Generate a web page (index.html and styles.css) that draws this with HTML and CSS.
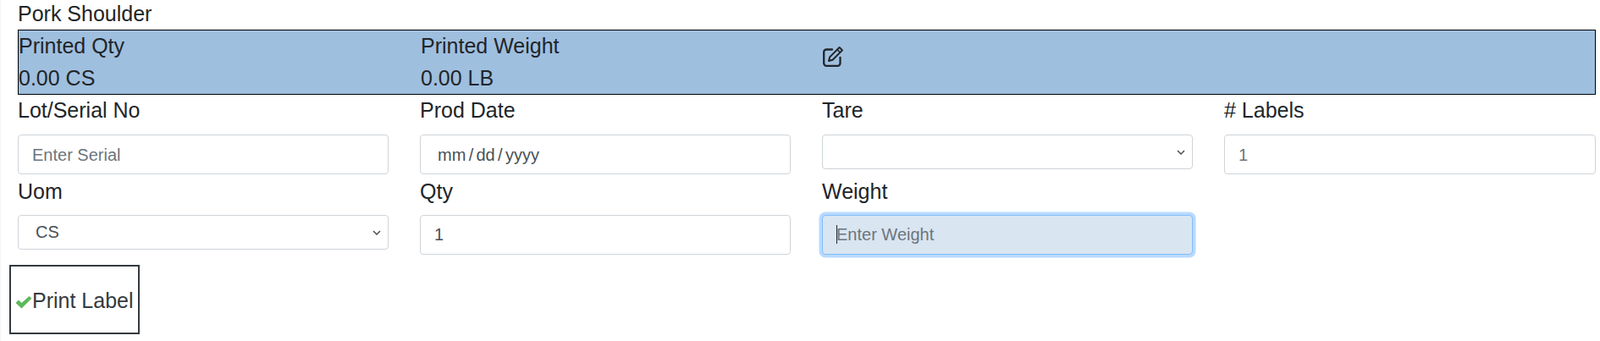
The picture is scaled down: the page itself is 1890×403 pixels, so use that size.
FILE: index.html
```html
<!DOCTYPE html>
<html lang="en">
<head>
<meta charset="utf-8">
<title>Print Label</title>
<link rel="stylesheet" href="styles.css">
</head>
<body>
<div class="page">
  <div class="title">Pork Shoulder</div>
  <div class="band">
    <div class="band-col"><div>Printed Qty</div><div>0.00 CS</div></div>
    <div class="band-col"><div>Printed Weight</div><div>0.00 LB</div></div>
    <div class="band-icon">
      <svg class="edit-icon" viewBox="0 0 25 25" fill="none" stroke="#212529" stroke-width="2.3" stroke-linecap="round" stroke-linejoin="round">
        <path d="M11 4.5H4.2A3 3 0 0 0 1.2 7.5V20.8A3 3 0 0 0 4.2 23.8H17.5A3 3 0 0 0 20.5 20.8V14"/>
        <path d="M19.6 2 23 5.4 11.6 16.8 7 18l1.2-4.6Z" stroke-width="2"/>
        <path d="M17 4.6l3.4 3.4" stroke-width="1.6"/>
      </svg>
    </div>
  </div>
  <div class="form-grid">
    <div class="field first"><label>Lot/Serial No</label><input class="control" type="text" placeholder="Enter Serial"></div>
    <div class="field first"><label>Prod Date</label><input class="control date" type="text" value="mm / dd / yyyy"></div>
    <div class="field first"><label>Tare</label><select class="control select"><option></option></select></div>
    <div class="field first"><label># Labels</label><input class="control muted" type="text" value="1"></div>
    <div class="field"><label>Uom</label><select class="control select"><option>CS</option></select></div>
    <div class="field"><label>Qty</label><input class="control" type="text" value="1"></div>
    <div class="field"><label>Weight</label>
      <div class="caret-wrap"><input class="control focused" type="text" placeholder="Enter Weight"><span class="caret"></span></div>
    </div>
  </div>
  <button class="print" type="button">
    <svg class="check" viewBox="0 0 20 16"><path d="M0.5 9 4 5.5 7.5 9 16.5 1 19.5 3.5 7.5 15.5Z" fill="#5cb85c"/></svg>Print Label
  </button>
</div>
</body>
</html>
```
FILE: styles.css
```css
* { box-sizing: border-box; }
html, body { margin: 0; padding: 0; background: #fff; }
body { font-family: "Liberation Sans", Arial, sans-serif; color: #212529; }
.page {
  width: 1890px;
  height: 403px;
  padding: 0 5px 0 20px;
  border-left: 1px solid #f4f4f4;
  overflow: hidden;
}
.title { font-size: 25px; line-height: 32px; height: 35px; }
.band {
  display: grid;
  grid-template-columns: repeat(3, 475px) 1fr;
  height: 77px;
  background: #9fbfdf;
  border: 1px solid #000;
  font-size: 25px;
  line-height: 36px;
}
.band-col { display: grid; grid-auto-rows: 36px; row-gap: 2px; align-content: start; }
.band-icon { padding-top: 18px; }
.edit-icon { width: 25px; height: 25px; display: block; }
.form-grid {
  display: grid;
  grid-template-columns: 438px 438px 438px 1fr;
  column-gap: 37px;
}
.field { height: 95px; }
.field label { display: block; font-size: 25px; line-height: 36px; padding-top: 3px; margin-bottom: 10px; }
.field.first { height: 93px; }
.field.first label { padding-top: 0; margin-bottom: 11px; }
.control {
  display: block;
  width: 100%;
  height: 47px;
  padding: 7px 16px 8px;
  font: 20px/30px "Liberation Sans", Arial, sans-serif;
  color: #495057;
  background: #fff;
  border: 1px solid #ced4da;
  border-radius: 4px;
  outline: none;
}
.field.first .control { padding-top: 8px; padding-bottom: 7px; }
.control::placeholder { color: #6c757d; }
.field.first .date { padding-left: 20px; word-spacing: -2.25px; }
.muted { color: #6c757d; }
.field .select, .field.first .select {
  height: 41px;
  padding: 3px 30px 5px 20px;
  appearance: none;
  background: #fff url("data:image/svg+xml,%3Csvg xmlns='http://www.w3.org/2000/svg' viewBox='0 0 10 6'%3E%3Cpath d='M1 1l4 4 4-4' fill='none' stroke='%23495057' stroke-width='1.5'/%3E%3C/svg%3E") no-repeat right 8px center / 10px 6px;
}
.caret-wrap { position: relative; }
.caret { position: absolute; left: 17px; top: 12px; width: 1px; height: 22px; background: #212529; }
.focused {
  background: #d9e5f1;
  border-color: #80bdff;
  box-shadow: 0 0 0 3.5px #b8daff;
}
.print {
  display: flex;
  align-items: center;
  width: 154px;
  height: 82px;
  margin: 13px 0 0 -10px;
  padding: 2px 0 0 5px;
  background: #fff;
  border: 2px solid #343a40;
  font: 25px "Liberation Sans", Arial, sans-serif;
  color: #343a40;
  white-space: nowrap;
}
.check { width: 20px; height: 16px; margin-top: 4px; flex: none; }
```
